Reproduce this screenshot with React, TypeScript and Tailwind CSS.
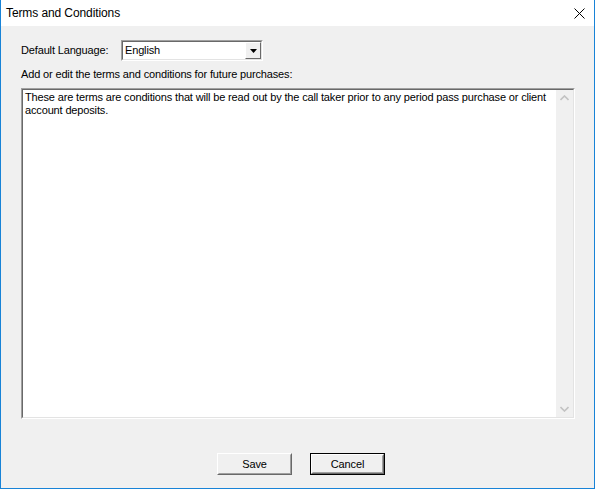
import React from "react";

const ChevronUp = () => (
  <svg width="9" height="6" viewBox="0 0 9 6" className="block">
    <path d="M0.5 5 L4.5 1 L8.5 5" fill="none" stroke="#c2c2c2" strokeWidth="1.6" />
  </svg>
);

const ChevronDown = () => (
  <svg width="9" height="6" viewBox="0 0 9 6" className="block">
    <path d="M0.5 1 L4.5 5 L8.5 1" fill="none" stroke="#c2c2c2" strokeWidth="1.6" />
  </svg>
);

const Button = ({ label, isDefault }: { label: string; isDefault?: boolean }) => (
  <div
    className={`w-[75px] h-[22px] ${isDefault ? "border border-[#000]" : ""}`}
  >
    <div className="w-full h-full border border-t-white border-l-white border-r-[#696969] border-b-[#696969] bg-[#f0f0f0]">
      <div className="w-full h-full border border-t-[#f0f0f0] border-l-[#f0f0f0] border-r-[#a0a0a0] border-b-[#a0a0a0] flex items-center justify-center text-[11px] text-black">
        {label}
      </div>
    </div>
  </div>
);

export default function App() {
  return (
    <div
      className="w-[595px] h-[489px] bg-[#f0f0f0] border-x border-b border-[#1883d7] flex flex-col overflow-hidden"
      style={{ fontFamily: '"Liberation Sans", Arial, sans-serif' }}
    >
      {/* Title bar */}
      <div className="h-[26px] bg-white flex items-center justify-between shrink-0">
        <span className="pl-[5px] text-[12px] tracking-[-0.1px] text-black">Terms and Conditions</span>
        <svg width="11" height="11" viewBox="0 0 11 11" className="mr-[9px]">
          <path d="M0.5 0.5 L10.5 10.5 M10.5 0.5 L0.5 10.5" stroke="#000" strokeWidth="1" />
        </svg>
      </div>

      {/* Body */}
      <div className="flex flex-col pl-[20px] text-[11px] tracking-[-0.15px] text-black">
        <div className="flex items-center mt-[14px] h-[21px]">
          <span className="w-[100px]">Default Language:</span>
          <div className="w-[142px] h-[21px] border border-t-[#a0a0a0] border-l-[#a0a0a0] border-r-white border-b-white">
            <div className="w-full h-full border border-t-[#696969] border-l-[#696969] border-r-[#e3e3e3] border-b-[#e3e3e3] bg-white flex items-center">
              <span className="flex-1 pl-[2px]">English</span>
              <div className="w-[16px] h-[17px] bg-[#f0f0f0] border border-t-white border-l-white border-r-[#696969] border-b-[#696969] flex items-center justify-center">
                <svg width="7" height="4" viewBox="0 0 7 4">
                  <path d="M0 0 L7 0 L3.5 4 Z" fill="#000" />
                </svg>
              </div>
            </div>
          </div>
        </div>

        <div className="mt-[7px] leading-[13px]">Add or edit the terms and conditions for future purchases:</div>

        <div className="mt-[7px] w-[554px] h-[331px] border border-t-[#a0a0a0] border-l-[#a0a0a0] border-r-white border-b-white">
          <div className="w-full h-full border border-t-[#696969] border-l-[#696969] border-r-[#e3e3e3] border-b-[#e3e3e3] bg-white flex">
            <div className="flex-1 pl-[2px] pt-[1px] leading-[13px] whitespace-nowrap overflow-hidden">
              These are terms are conditions that will be read out by the call taker prior to any period pass purchase or client
              <br />
              account deposits.
            </div>
            <div className="w-[17px] h-full bg-[#f0f0f0] flex flex-col items-center justify-between py-[5px]">
              <ChevronUp />
              <ChevronDown />
            </div>
          </div>
        </div>

        <div className="flex mt-[34px] pl-[196px] gap-[18px]">
          <Button label="Save" />
          <Button label="Cancel" isDefault />
        </div>
      </div>
    </div>
  );
}
